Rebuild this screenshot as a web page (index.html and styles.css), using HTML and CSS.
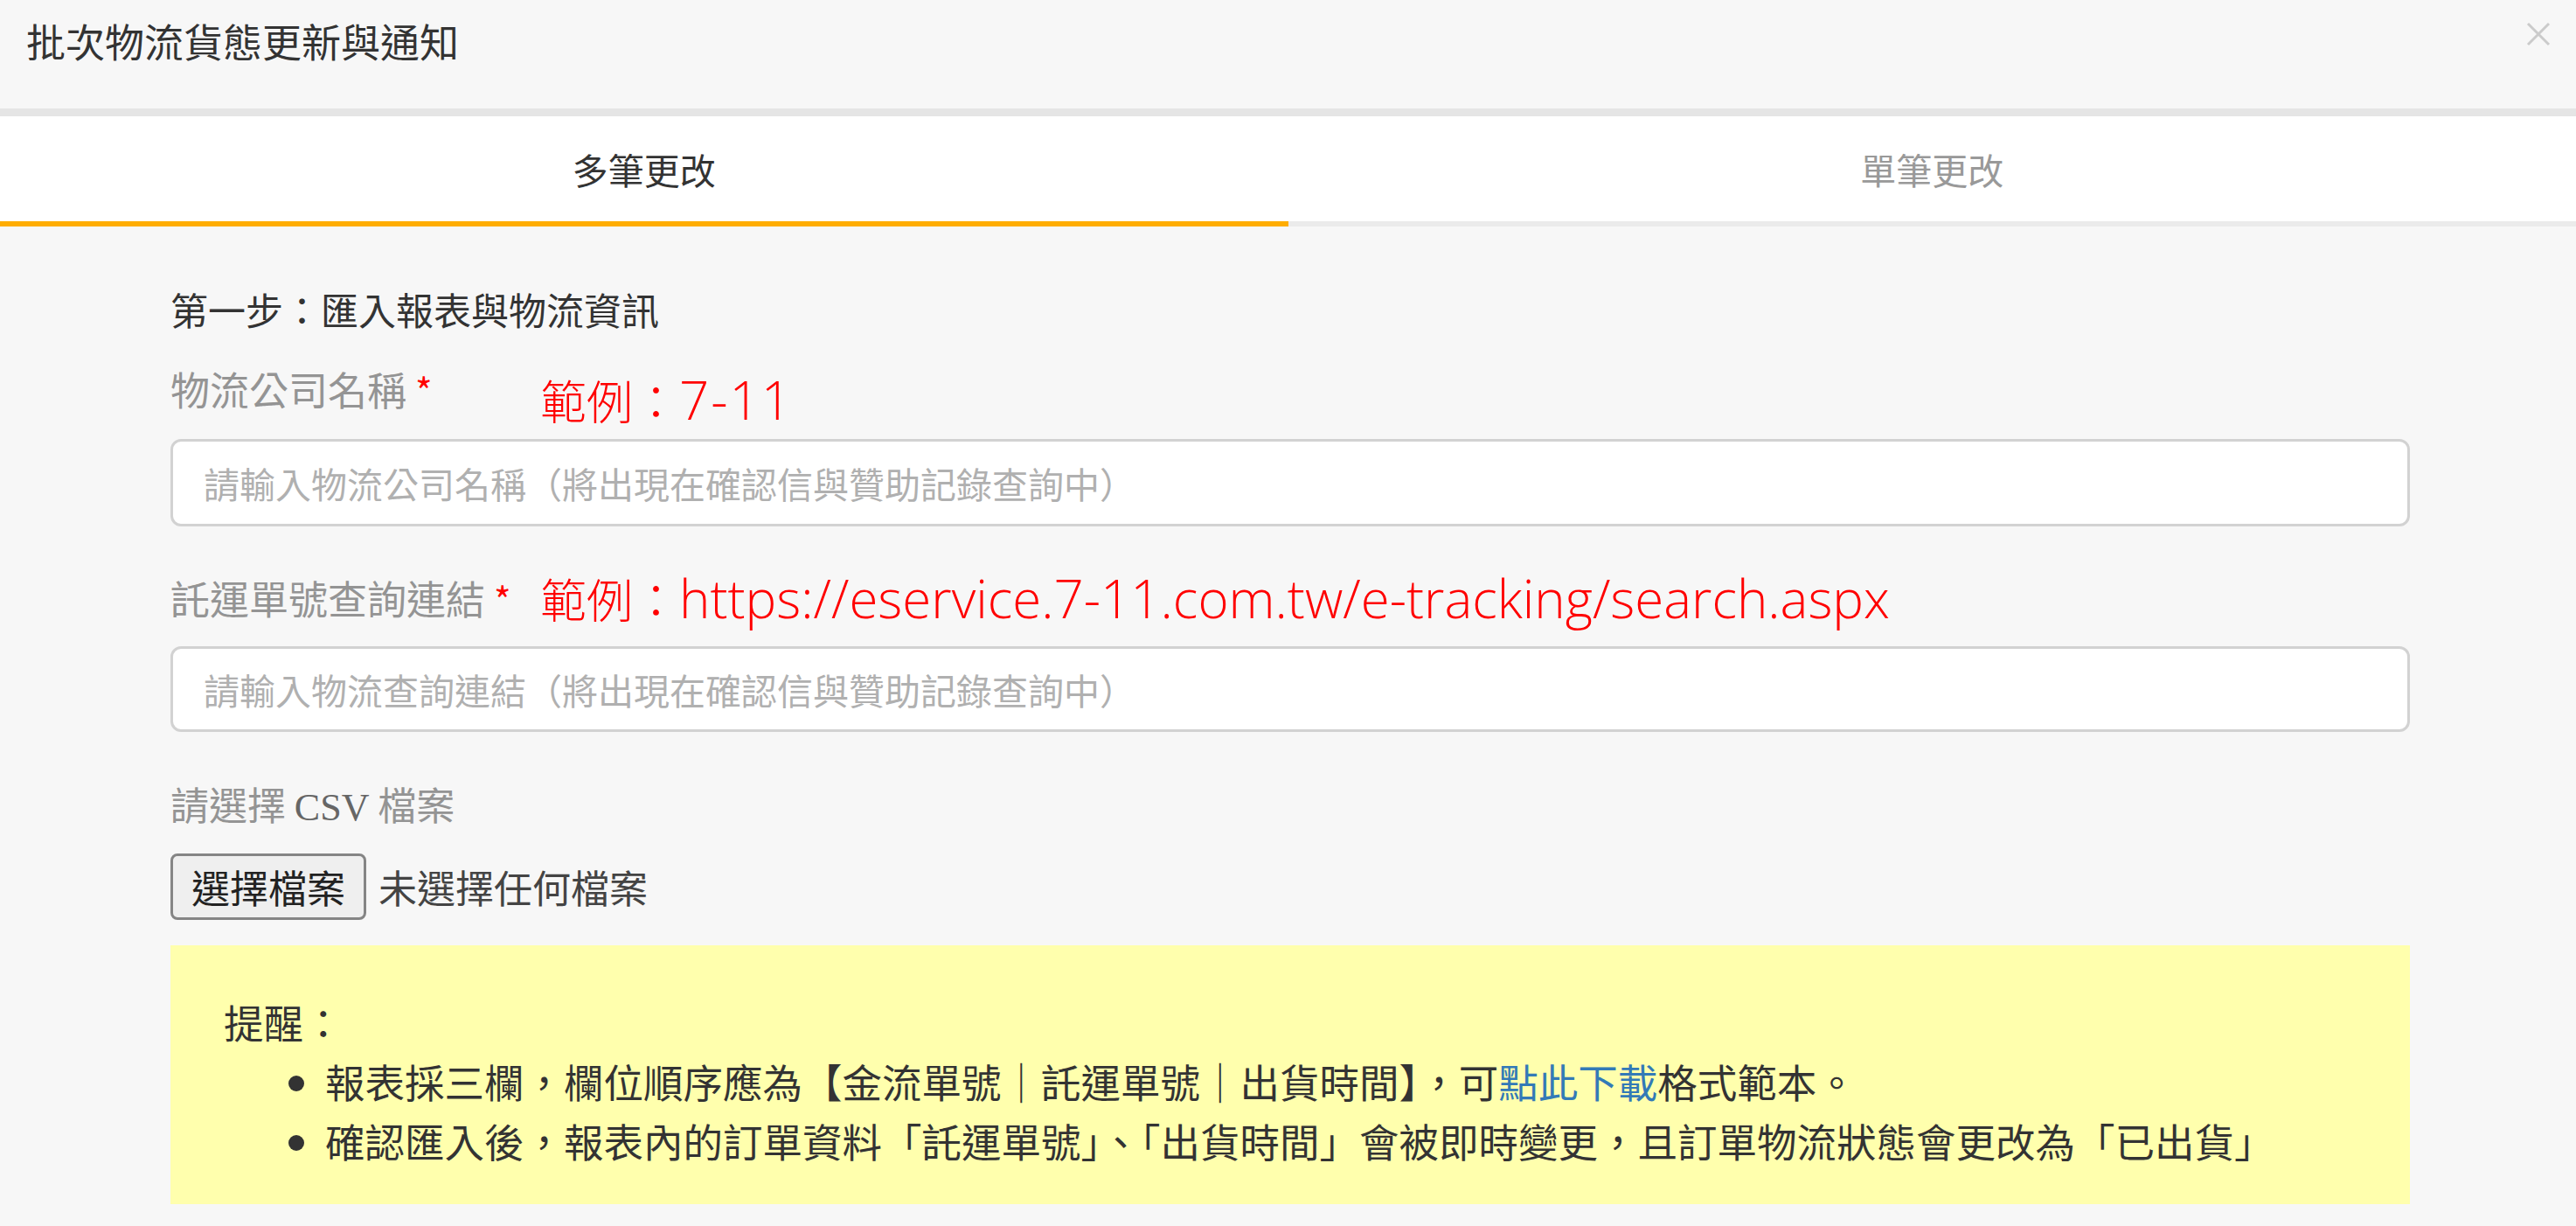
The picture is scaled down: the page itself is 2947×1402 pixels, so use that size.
FILE: index.html
```html
<!doctype html>
<html>
<head>
	<meta charset="utf-8">
	<title>批次物流貨態更新與通知</title>
	<link rel="stylesheet" href="styles.css">
</head>
<body>
	<div class="modal">
		<div class="modal-header">
			<h4 class="modal-title">批次物流貨態更新與通知</h4>
			<button class="close" type="button">
				<svg width="28" height="28" viewBox="0 0 28 28">
					<path d="M2 2 L26 26 M26 2 L2 26" stroke="#cbcbcb" stroke-width="3" fill="none"/>
				</svg>
			</button>
		</div>
		<div class="divider"></div>

		<ul class="tabs">
			<li class="tab active">多筆更改</li>
			<li class="tab">單筆更改</li>
		</ul>

		<div class="tab-content">
			<p class="step">第一步：匯入報表與物流資訊</p>

			<div class="field-row row-company">
				<label class="field-label">物流公司名稱 <span class="req">*</span></label>
				<span class="example">範例：<span class="latin short">7-11</span></span>
			</div>
			<input class="form-input" type="text" placeholder="請輸入物流公司名稱（將出現在確認信與贊助記錄查詢中）">

			<div class="field-row row-link">
				<label class="field-label">託運單號查詢連結 <span class="req">*</span></label>
				<span class="example">範例：<span class="latin">https://eservice.7-11.com.tw/e-tracking/search.aspx</span></span>
			</div>
			<input class="form-input" type="text" placeholder="請輸入物流查詢連結（將出現在確認信與贊助記錄查詢中）">

			<div class="csv-label">請選擇 <span class="serif">CSV</span> 檔案</div>
			<div class="file-pick">
				<button class="file-btn" type="button">選擇檔案</button>
				<span class="file-name">未選擇任何檔案</span>
			</div>

			<div class="notice">
				<div class="notice-title">提醒：</div>
				<ul class="notice-list">
					<li>報表採三欄，欄位順序應為【金流單號｜託運單號｜出貨時間】，可<a href="#">點此下載</a>格式範本。</li>
					<li>確認匯入後，報表內的訂單資料「託運單號」、「出貨時間」會被即時變更，且訂單物流狀態會更改為「已出貨」</li>
				</ul>
			</div>
		</div>
	</div>
</body>
</html>
```

FILE: styles.css
```css
body {
	margin: 0;
	background-color: #f7f7f7;
	font-family: "Noto Sans CJK TC", "Noto Sans", sans-serif;
	color: #333;
}

.modal-header {
	display: flex;
	justify-content: space-between;
	align-items: flex-start;
	box-sizing: border-box;
	height: 124px;
	padding: 17px 29px 0 30px;
}

.modal-title {
	margin: 0;
	font-size: 45px;
	font-weight: normal;
	line-height: 60px;
	color: #333;
}

.close {
	margin-top: 8px;
	padding: 0;
	border: 0;
	background: none;
	line-height: 0;
}

.divider {
	height: 9px;
	background-color: #e5e5e5;
}

.tabs {
	display: flex;
	margin: 0;
	padding: 0;
	list-style: none;
	background-color: #fff;
}

.tab {
	flex: 1;
	height: 120px;
	line-height: 120px;
	text-align: center;
	font-size: 41px;
	color: #999;
	border-bottom: 6px solid #ebebeb;
}

.tab.active {
	color: #333;
	border-bottom-color: #ffad00;
}

.tab-content {
	padding: 64px 190px 24px 195px;
}

.step {
	margin: 0;
	font-size: 43px;
	line-height: 60px;
	color: #333;
}

.field-row {
	display: flex;
}

.row-company {
	margin-top: 32px;
	align-items: flex-start;
}

.row-company .example {
	margin-top: 7px;
}

.row-link {
	margin-top: 47px;
	align-items: center;
}

.field-label {
	width: 423px;
	flex-shrink: 0;
	font-size: 45px;
	line-height: 60px;
	color: #949494;
}

.req {
	font-size: 42px;
	color: #f00;
}

.example {
	font-family: "Noto Sans CJK TC", sans-serif;
	font-size: 53px;
	font-weight: 300;
	line-height: 70px;
	color: #f00;
}

.latin {
	font-family: "Open Sans", sans-serif;
	font-size: 60px;
	font-weight: 300;
}

.latin.short {
	letter-spacing: 2px;
}

.form-input {
	display: block;
	box-sizing: border-box;
	width: 100%;
	height: 100px;
	margin-top: 10px;
	padding: 0 35px;
	border: 3px solid #d2d2d2;
	border-radius: 12px;
	background-color: #fff;
	font-family: "Noto Sans CJK TC", sans-serif;
	font-size: 41px;
	color: #333;
}

.row-link + .form-input {
	margin-top: 20px;
	height: 98px;
}

.form-input::placeholder {
	color: #b0b0b0;
}

.csv-label {
	margin-top: 52px;
	font-size: 44px;
	line-height: 60px;
	color: #949494;
}

.serif {
	font-family: "Liberation Serif", serif;
	color: #666;
}

.file-pick {
	display: flex;
	align-items: center;
	margin-top: 22px;
}

.file-btn {
	box-sizing: border-box;
	height: 76px;
	padding: 0 21px;
	border: 3px solid #858585;
	border-radius: 8px;
	background-color: #efefef;
	font-family: "Noto Sans CJK TC", sans-serif;
	font-size: 44px;
	color: #222;
}

.file-name {
	margin-left: 14px;
	font-size: 44px;
	color: #444;
}

.notice {
	margin-top: 29px;
	padding: 53px 61px 39px;
	background-color: #ffffad;
	font-size: 45.5px;
	line-height: 68px;
	color: #333;
}

.notice-list {
	margin: 0;
	padding-left: 116px;
}

.notice-list a {
	color: #337ab7;
	text-decoration: none;
}
```
